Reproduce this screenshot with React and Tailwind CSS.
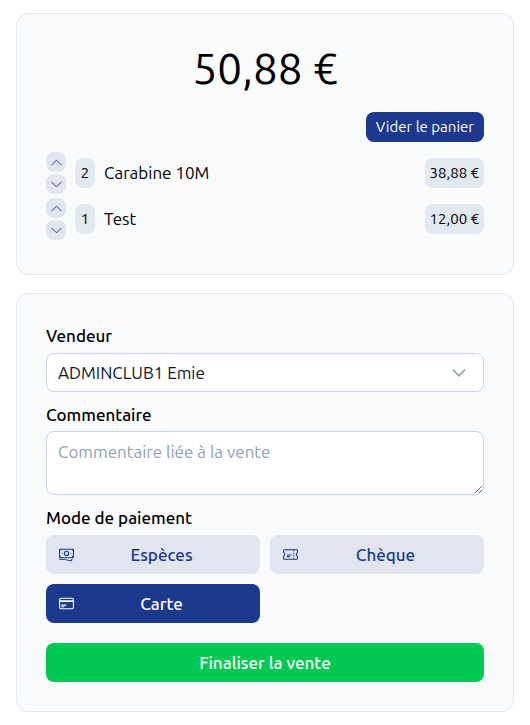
import React, { useState } from "react";
import {
  HiOutlineBanknotes,
  HiOutlineChevronDown,
  HiOutlineChevronUp,
  HiOutlineCreditCard,
  HiOutlineTicket,
} from "react-icons/hi2";

const initialItems = [
  { id: 1, name: "Carabine 10M", quantity: 2, price: 19.44 },
  { id: 2, name: "Test", quantity: 1, price: 12 },
];

const paymentModes = [
  { id: "especes", label: "Espèces", icon: HiOutlineBanknotes },
  { id: "cheque", label: "Chèque", icon: HiOutlineTicket },
  { id: "carte", label: "Carte", icon: HiOutlineCreditCard },
];

const formatPrice = (value) => `${value.toFixed(2).replace(".", ",")} €`;

function Card({ children }) {
  return (
    <section className="rounded-xl border border-slate-200 bg-slate-50 p-[29px]">
      {children}
    </section>
  );
}

function StepButton({ label, icon: Icon, onClick }) {
  return (
    <button
      type="button"
      aria-label={label}
      onClick={onClick}
      className="flex h-5 w-5 items-center justify-center rounded-lg bg-[#e1e5f0] text-[#1c398e]"
    >
      <Icon strokeWidth={1.5} className="h-[15px] w-[15px]" />
    </button>
  );
}

function CartItem({ item, onChange }) {
  return (
    <li className="flex items-center gap-[9px]">
      <div className="flex flex-col gap-0.5">
        <StepButton
          label={`Ajouter ${item.name}`}
          icon={HiOutlineChevronUp}
          onClick={() => onChange(item.id, 1)}
        />
        <StepButton
          label={`Retirer ${item.name}`}
          icon={HiOutlineChevronDown}
          onClick={() => onChange(item.id, -1)}
        />
      </div>
      <span className="min-w-5 rounded-lg bg-slate-200 px-[5px] text-center text-[15px] leading-[30px]">
        {item.quantity}
      </span>
      <span className="flex-1">{item.name}</span>
      <span className="rounded-lg bg-slate-200 px-[5px] text-[15px] leading-[30px]">
        {formatPrice(item.quantity * item.price)}
      </span>
    </li>
  );
}

export default function App() {
  const [items, setItems] = useState(initialItems);
  const [mode, setMode] = useState("carte");

  const total = items.reduce((sum, i) => sum + i.quantity * i.price, 0);

  const changeQuantity = (id, delta) =>
    setItems(
      items
        .map((i) => (i.id === id ? { ...i, quantity: i.quantity + delta } : i))
        .filter((i) => i.quantity > 0)
    );

  return (
    <main className="flex flex-col gap-[18px] bg-white px-4 py-[13px] font-['Ubuntu','Noto_Sans',sans-serif] text-[17px] leading-[26px] text-black">
      <Card>
        <p className="text-center text-[44px] leading-[50px]">{formatPrice(total)}</p>
        <div className="mt-[19px] flex justify-end">
          <button
            type="button"
            onClick={() => setItems([])}
            className="rounded-lg bg-[#1c398e] px-[10px] text-[15px] leading-[30px] text-white"
          >
            Vider le panier
          </button>
        </div>
        <ul className="mt-[10px] mb-[5px] flex flex-col gap-1">
          {items.map((item) => (
            <CartItem key={item.id} item={item} onChange={changeQuantity} />
          ))}
        </ul>
      </Card>

      <Card>
        <form className="flex flex-col gap-[10px]" onSubmit={(e) => e.preventDefault()}>
          <div className="flex flex-col gap-1">
            <label htmlFor="vendeur" className="font-medium">
              Vendeur
            </label>
            <div className="grid items-center">
              <select
                id="vendeur"
                className="col-start-1 row-start-1 h-[39px] w-full appearance-none rounded-lg border border-slate-300 bg-white px-[11px] text-slate-900"
              >
                <option>ADMINCLUB1 Emie</option>
              </select>
              <HiOutlineChevronDown
                strokeWidth={2.2}
                className="pointer-events-none col-start-1 row-start-1 mr-4 h-[18px] w-[18px] justify-self-end text-slate-400"
              />
            </div>
          </div>

          <div className="flex flex-col gap-[3px]">
            <label htmlFor="commentaire" className="font-medium">
              Commentaire
            </label>
            <textarea
              id="commentaire"
              placeholder="Commentaire liée à la vente"
              className="h-16 w-full rounded-lg border border-slate-300 bg-white px-[11px] py-[7px] placeholder:text-slate-400"
            />
          </div>

          <fieldset>
            <legend className="mb-1 font-medium">Mode de paiement</legend>
            <div className="grid grid-cols-2 gap-[10px]">
              {paymentModes.map(({ id, label, icon: Icon }) => (
                <button
                  key={id}
                  type="button"
                  aria-pressed={mode === id}
                  onClick={() => setMode(id)}
                  className={`flex h-[39px] items-center rounded-lg px-3 font-medium ${
                    mode === id ? "bg-[#1c398e] text-white" : "bg-[#e1e5f0] text-[#1c398e]"
                  }`}
                >
                  <Icon className="h-[17px] w-[17px]" />
                  <span className="flex-1 text-center">{label}</span>
                </button>
              ))}
            </div>
          </fieldset>

          <button
            type="submit"
            className="mt-[10px] h-[39px] rounded-lg bg-[#00c951] font-medium text-white"
          >
            Finaliser la vente
          </button>
        </form>
      </Card>
    </main>
  );
}
